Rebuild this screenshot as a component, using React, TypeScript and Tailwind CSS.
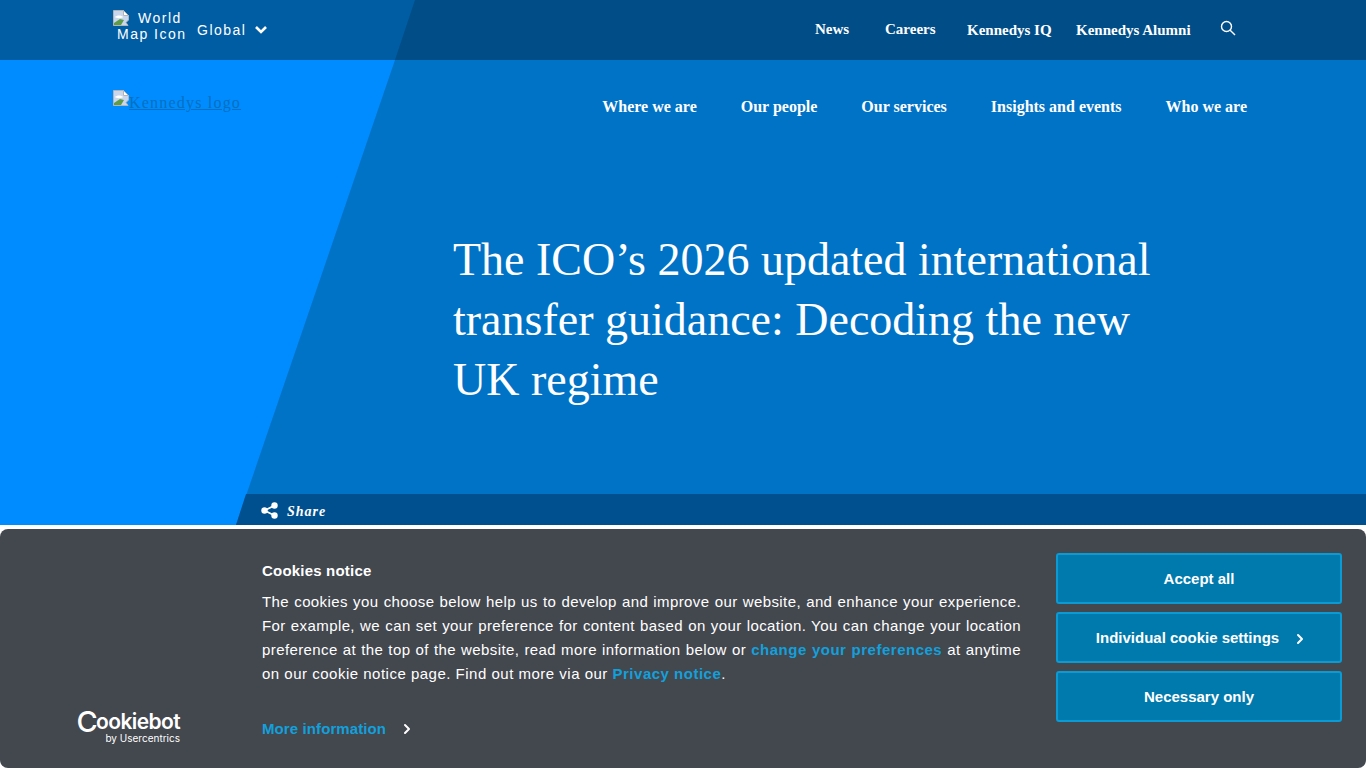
import { ChevronRight } from "lucide-react";

const serif = "font-['Liberation_Serif',serif]";
const sans = "font-['Liberation_Sans',sans-serif]";

// image placeholder the browser shows when a picture fails to load
const BrokenImage = () => (
  <svg width="16" height="16" viewBox="0 0 16 16" className="shrink-0">
    <path d="M0.5 0.5H10.5L15.5 5.5V10L13 12.5L15 15.5H0.5Z" fill="#c9d7ee" stroke="#b4b4b4" />
    <path d="M10.5 0.5V5.5H15.5Z" fill="#fff" stroke="#b4b4b4" />
    <path d="M2 7c2-2 6-2 8 0-1 1.500-7 1.500-8 0Z" fill="#fff" />
    <path d="M1 15v-2l6-4 4 1-3 5Z" fill="#5f9c4a" />
  </svg>
);

const topLinks = [
  { label: "News", cls: "w-[36px] mr-[34px] -mt-[2px]" },
  { label: "Careers", cls: "w-[52px] mr-[30px] -mt-[2px]" },
  { label: "Kennedys IQ", cls: "w-[86px] mr-[23px]" },
  { label: "Kennedys Alumni", cls: "w-[116px] mr-[28px]" },
];

const mainLinks = ["Where we are", "Our people", "Our services", "Insights and events", "Who we are"];

const CookieButton = ({ label, arrow }: { label: string; arrow?: boolean }) => (
  <button
    className={`h-[51px] w-full flex items-center justify-center rounded-[3px] border-2 border-[#0a9ad4] bg-[#0079ad] pt-[1px] text-[15px] font-bold text-white ${
      arrow ? "pl-[6px]" : ""
    }`}
  >
    {label}
    {arrow && <ChevronRight size={16} strokeWidth={3} className="ml-[13px] mt-[2px]" />}
  </button>
);

export default function App() {
  return (
    <div className="relative h-[768px] w-[1366px] overflow-hidden bg-white flex flex-col">
      {/* top bar */}
      <header className="relative h-[60px] shrink-0 bg-[#005da3]">
        <div className="absolute inset-0 bg-[#004d87] [clip-path:polygon(415px_0,100%_0,100%_100%,395px_100%)]" />
        <div className={`relative h-full flex items-center pl-[113px] pr-[130px] text-white ${serif}`}>
          <div className={`w-[74px] -mt-[8px] text-[14px] leading-[16px] tracking-[1.5px] ${sans}`}>
            <div className="flex">
              <BrokenImage />
              <span className="ml-[9px]">World</span>
            </div>
            <div className="pl-[4px] whitespace-nowrap">Map Icon</div>
          </div>
          <span className={`ml-[10px] text-[14px] tracking-[1.5px] ${sans}`}>Global</span>
          <svg width="14" height="10" viewBox="0 0 14 10" className="ml-[8px]" fill="none" stroke="#fff" strokeWidth="2.6">
            <path d="M2 2l5 5 5-5" />
          </svg>
          <nav className="ml-auto flex items-center text-[15px] font-bold">
            {topLinks.map((l) => (
              <a key={l.label} className={`whitespace-nowrap ${l.cls}`}>{l.label}</a>
            ))}
          </nav>
          <svg width="16" height="16" viewBox="0 0 16 16" className="-mt-[4px]" fill="none" stroke="#fff" strokeWidth="1.4">
            <circle cx="6.5" cy="6.5" r="5" />
            <path d="M10.2 10.2L15 15" />
          </svg>
        </div>
      </header>

      {/* hero */}
      <section className={`relative h-[465px] shrink-0 bg-[#008cff] ${serif}`}>
        <div className="absolute inset-0 bg-[#0073c7] [clip-path:polygon(395px_0,100%_0,100%_100%,236px_100%)]" />
        <div className="relative flex items-start justify-between pl-[113px] pr-[119px] pt-[30px]">
          <a className="flex text-[16px] leading-[18px] tracking-[1.2px] text-[#0070c0] underline">
            <BrokenImage />
            <span className="mt-[4px]">Kennedys logo</span>
          </a>
          <nav className="flex gap-[44px] pt-[5px] text-[16px] font-bold text-white">
            {mainLinks.map((l) => (
              <a key={l} className="whitespace-nowrap">{l}</a>
            ))}
          </nav>
        </div>
        <h1 className="relative ml-[453px] mt-[111px] w-[720px] text-[46px] leading-[60px] font-normal text-white">
          The ICO’s 2026 updated international transfer guidance: Decoding the new UK regime
        </h1>
        <div className="absolute inset-x-0 bottom-0 h-[31px] bg-[#00508f] [clip-path:polygon(246px_0,100%_0,100%_100%,236px_100%)] flex items-center pl-[261px] pt-[3px]">
          <svg width="17" height="17" viewBox="0 0 17 17" fill="#fff" className="-mt-[2px]">
            <circle cx="13.5" cy="3.5" r="3.2" />
            <circle cx="3.5" cy="8.5" r="3.2" />
            <circle cx="13.5" cy="13.5" r="3.2" />
            <path d="M3.5 8.5l10-5M3.5 8.5l10 5" stroke="#fff" strokeWidth="1.8" />
          </svg>
          <span className="ml-[9px] mt-[1px] text-[14px] font-bold italic tracking-[1px] text-white">Share</span>
        </div>
      </section>

      {/* cookie banner */}
      <aside className={`mt-[4px] h-[239px] shrink-0 rounded-[8px] bg-[#43474e] text-white flex ${sans}`}>
        <div className="w-[262px] shrink-0 flex flex-col items-end justify-end pr-[82px] pb-[24px] font-['Inter',sans-serif]">
          <div className="flex items-center text-[21px] leading-[22px] font-semibold tracking-[-0.6px]">
            <span className="text-[29px] font-medium -mr-[1px]">C</span>ookiebot
          </div>
          <div className="text-[10px] leading-[11px]">by Usercentrics</div>
        </div>
        <div className="w-[759px] shrink-0 pt-[32px]">
          <h2 className="text-[15px] leading-[20px] font-bold tracking-[0.2px]">Cookies notice</h2>
          <p className="mt-[9px] text-[15px] leading-[24px] tracking-[0.4px] text-justify">
            The cookies you choose below help us to develop and improve our website, and enhance your experience. For
            example, we can set your preference for content based on your location. You can change your location
            preference at the top of the website, read more information below or{" "}
            <a className="font-bold tracking-[0.5px] text-[#12a0dc]">change your preferences</a> at anytime{" "}
            <span className="tracking-[0.5px]">on our cookie notice page. Find out more via our </span>
            <a className="font-bold tracking-[0.5px] text-[#12a0dc]">Privacy notice</a>.
          </p>
          <div className="mt-[32px] flex items-center text-[15px] font-bold tracking-[0.1px] text-[#12a0dc]">
            More information
            <ChevronRight size={16} strokeWidth={3} className="ml-[13px] text-white" />
          </div>
        </div>
        <div className="ml-[35px] w-[286px] shrink-0 pt-[24px] flex flex-col gap-[8px]">
          <CookieButton label="Accept all" />
          <CookieButton label="Individual cookie settings" arrow />
          <CookieButton label="Necessary only" />
        </div>
      </aside>
    </div>
  );
}
